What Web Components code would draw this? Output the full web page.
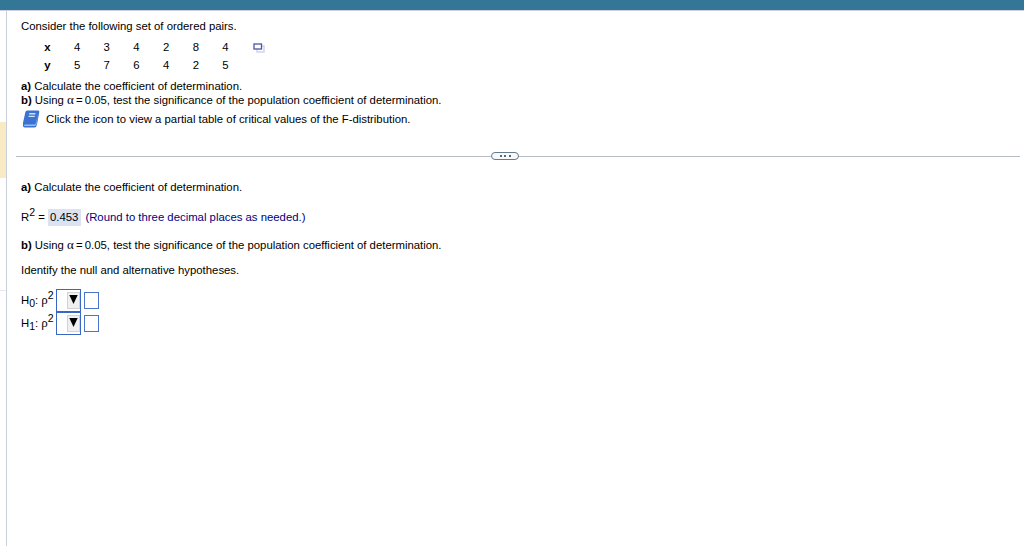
<!DOCTYPE html>
<html lang="en">
<head>
<meta charset="utf-8">
<title>Coefficient of determination</title>
<style>
  body {
    margin: 0;
    background: #fff;
    color: #000;
    font-family: "Liberation Sans", Arial, sans-serif;
    font-size: 11.35px;
  }
</style>
</head>
<body>
<exercise-page></exercise-page>

<script>
/**
 * One line of text. The --line property sets the height of the line.
 */
class TextLine extends HTMLElement {
    constructor() {
        super();
        this.attachShadow({ mode: 'open' });
        this.shadowRoot.innerHTML = `
            <style>
                :host {
                    display: flex;
                    align-items: center;
                    height: var(--line, 14px);
                    line-height: 14px;
                    white-space: pre;
                }
            </style>
            <span><slot></slot></span>
        `;
    }
}

/**
 * Table of ordered pairs, with the pop-out icon on the first row.
 */
class PairTable extends HTMLElement {
    constructor() {
        super();
        this.attachShadow({ mode: 'open' });
        this.shadowRoot.innerHTML = `
            <style>
                :host { display: flex; }
                .grid {
                    display: grid;
                    grid-template-columns: repeat(7, 29.7px);
                    grid-auto-rows: 18px;
                    line-height: 18px;
                    text-align: center;
                }
                svg { display: block; margin: 5px 0 0 12.6px; }
            </style>
            <div class="grid"></div>
            <svg width="12" height="10" viewBox="0 0 12 10">
                <rect x="4" y="3" width="7" height="6" fill="#fff" stroke="#d5d8ed" stroke-width="1.6"/>
                <rect x="1" y="1" width="7.5" height="5" fill="#fff" stroke="#4c55a6" stroke-width="1.3"/>
            </svg>
        `;
    }

    connectedCallback() {
        const grid = this.shadowRoot.querySelector('.grid');
        for (const name of ['x', 'y']) {
            const head = document.createElement('b');
            head.textContent = name;
            grid.append(head);
            for (const value of this.getAttribute(name).split(' ')) {
                const cell = document.createElement('span');
                cell.textContent = value;
                grid.append(cell);
            }
        }
    }
}

/**
 * Blue book icon.
 */
class BookIcon extends HTMLElement {
    constructor() {
        super();
        this.attachShadow({ mode: 'open' });
        this.shadowRoot.innerHTML = `
            <style>
                :host { display: block; }
                svg { display: block; }
            </style>
            <svg width="18" height="18" viewBox="0 0 18 18">
                <path d="M5.2.5h11q1.4 0 1.1 1.5L15 14.6q-.5 2.9-2.4 2.9H2.8Q.8 17.5.9 15.3L1 12.8 3.4 2Q3.7.5 5.2.5z" fill="#3b73d1"/>
                <path d="M2 15.2q.2-.8 1.2-.8h9.3q1.2 0 1.6-1.6L16.2 3.5l-1.8 10.7q-.3 1.7-1.9 1.7H2.7q-.8 0-.7-.7z" fill="#9dbbee"/>
                <path d="M7.2 3.8h6.2M6.6 6.4h6.2" stroke="#d2e0f9" stroke-width="1.4" fill="none"/>
            </svg>
        `;
    }
}

/**
 * Rule with the collapse handle.
 */
class SectionDivider extends HTMLElement {
    constructor() {
        super();
        this.attachShadow({ mode: 'open' });
        this.shadowRoot.innerHTML = `
            <style>
                :host { display: flex; align-items: center; height: 14px; }
                .rule { flex: 1; height: 1px; background: #b9bdc5; }
                .rule:first-of-type { flex: 0 0 475px; }
                .handle {
                    box-sizing: border-box;
                    width: 28px;
                    height: 8px;
                    display: flex;
                    align-items: center;
                    justify-content: center;
                    gap: 2.5px;
                    border: 1px solid #66798f;
                    border-radius: 4px;
                    background: #f6f8fa;
                }
                i { width: 2px; height: 2px; background: #5d6673; }
            </style>
            <div class="rule"></div>
            <div class="handle"><i></i><i></i><i></i></div>
            <div class="rule"></div>
        `;
    }
}

/**
 * Hypothesis row: label slot, operator menu and answer box.
 */
class HypothesisRow extends HTMLElement {
    constructor() {
        super();
        this.attachShadow({ mode: 'open' });
        this.shadowRoot.innerHTML = `
            <style>
                :host { display: flex; align-items: center; height: 23px; }
                .label { width: 35px; padding-bottom: 2px; white-space: pre; line-height: 14px; }
                .menu {
                    box-sizing: border-box;
                    width: 25px;
                    height: 23px;
                    display: flex;
                    justify-content: flex-end;
                    align-items: center;
                    border: 1px solid #3a66c4;
                }
                .arrow {
                    box-sizing: border-box;
                    width: 13px;
                    height: 17px;
                    display: flex;
                    align-items: center;
                    justify-content: center;
                    border: 1px solid #d2d2d2;
                    background: #f0f0f0;
                }
                .arrow svg { display: block; margin-top: -2px; }
                .answer {
                    box-sizing: border-box;
                    width: 15px;
                    height: 17px;
                    margin-left: 3px;
                    border: 1px solid #4a74cc;
                }
            </style>
            <div class="label"><slot></slot></div>
            <div class="menu">
                <div class="arrow">
                    <svg width="9" height="9" viewBox="0 0 9 9"><path d="M.3 0h8.4L4.5 9z"/></svg>
                </div>
            </div>
            <div class="answer"></div>
        `;
    }
}

/**
 * Whole page: top bar, left gutter and the exercise panel.
 */
class ExercisePage extends HTMLElement {
    constructor() {
        super();
        this.attachShadow({ mode: 'open' });
        this.shadowRoot.innerHTML = `
            <style>
                :host { display: flex; flex-direction: column; height: 546px; overflow: hidden; }
                .bar { height: 10px; background: #337696; border-bottom: 1px solid #cfcfe4; }
                .body { flex: 1; display: flex; }
                .gutter { width: 6px; border-right: 1px solid #c9d0dc; }
                .mark { height: 56px; margin-top: 111px; background: #f8ebc3; }
                .tick { height: 1px; margin-top: 112px; background: #e6e8ec; }
                .panel { flex: 1; padding: 8px 4px 0 14px; }
                pair-table { margin: 5px 0 5px 11.5px; }
                .book { display: flex; align-items: center; gap: 6px; height: 20px; margin: 2px 0 0 1px; }
                section-divider { margin: 20px 0 17px -5px; }
                .result { --line: 20px; margin: 13px 0 11px; }
                .value { display: inline-block; height: 17px; line-height: 17px; padding: 0 3px 0 2px; margin-right: 4px; background: #dbe3f1; }
                .hint { color: #00007f; }
                .identify { margin: 11px 0 12px; }
                .alpha, .rho { font-family: "Liberation Serif", serif; font-size: 13px; line-height: 0; }
                .tight { word-spacing: -1px; }
                sup, sub { font-size: 10.5px; line-height: 0; vertical-align: baseline; position: relative; }
                sup { top: -5px; }
                sub { top: 3px; }
            </style>
            <div class="bar"></div>
            <div class="body">
                <div class="gutter"><div class="mark"></div><div class="tick"></div></div>
                <div class="panel">
                    <text-line>Consider the following set of ordered pairs.</text-line>
                    <pair-table x="4 3 4 2 8 4" y="5 7 6 4 2 5"></pair-table>
                    <text-line><b>a)</b> Calculate the coefficient of determination.</text-line>
                    <text-line><b>b)</b> Using <span class="alpha">α</span><span class="tight"> = </span>0.05, test the significance of the population coefficient of determination.</text-line>
                    <div class="book">
                        <book-icon></book-icon>
                        <text-line>Click the icon to view a partial table of critical values of the F-distribution.</text-line>
                    </div>
                    <section-divider></section-divider>
                    <text-line><b>a)</b> Calculate the coefficient of determination.</text-line>
                    <text-line class="result">R<sup>2</sup> = <span class="value">0.453</span><span class="hint">(Round to three decimal places as needed.)</span></text-line>
                    <text-line><b>b)</b> Using <span class="alpha">α</span><span class="tight"> = </span>0.05, test the significance of the population coefficient of determination.</text-line>
                    <text-line class="identify">Identify the null and alternative hypotheses.</text-line>
                    <hypothesis-row>H<sub>0</sub>: <span class="rho">ρ</span><sup>2</sup></hypothesis-row>
                    <hypothesis-row>H<sub>1</sub>: <span class="rho">ρ</span><sup>2</sup></hypothesis-row>
                </div>
            </div>
        `;
    }
}

customElements.define('text-line', TextLine);
customElements.define('pair-table', PairTable);
customElements.define('book-icon', BookIcon);
customElements.define('section-divider', SectionDivider);
customElements.define('hypothesis-row', HypothesisRow);
customElements.define('exercise-page', ExercisePage);
</script>
</body>
</html>
